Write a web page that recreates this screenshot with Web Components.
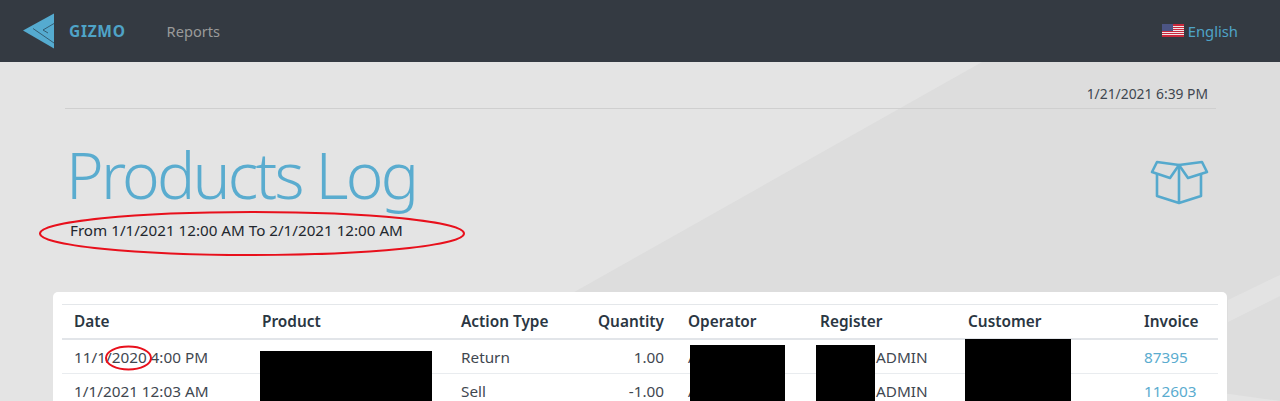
<!DOCTYPE html>
<html>
<head>
<meta charset="utf-8">
<title>Products Log</title>
<style>
    html, body { margin: 0; height: 100%; overflow: hidden; }
    body {
        font-family: "Noto Sans", "Open Sans", sans-serif;
        color: #212529;
        background: #e4e4e4;
    }
</style>
</head>
<body>
<gizmo-app>
    <gizmo-nav slot="nav"></gizmo-nav>
    <page-head></page-head>
    <log-table></log-table>
</gizmo-app>

<script>
// app shell with the diagonal background
class GizmoApp extends HTMLElement {
    connectedCallback() {
        const shadow = this.attachShadow({ mode: "open" });
        shadow.innerHTML = `
            <style>
                :host { display: block; position: relative; height: 401px; overflow: hidden; }
                .bg { position: absolute; left: 0; top: 0; width: 1280px; height: 401px; }
                .content { position: relative; }
            </style>
            <svg class="bg" viewBox="0 0 1280 401" aria-hidden="true">
                <rect width="1280" height="401" fill="#e4e4e4"/>
                <polygon points="982,62 1280,62 1280,401 560,300" fill="#dddddd"/>
                <polygon points="1280,275 1228,300 1228,322 1280,296" fill="#e3e3e3"/>
            </svg>
            <div class="content">
                <slot name="nav"></slot>
                <slot></slot>
            </div>
        `;
    }
}

class GizmoNav extends HTMLElement {
    connectedCallback() {
        const shadow = this.attachShadow({ mode: "open" });
        shadow.innerHTML = `
            <style>
                :host { display: block; }
                nav {
                    height: 62px;
                    background: #343a42;
                    display: flex;
                    align-items: center;
                    padding: 0 42px 1px 23px;
                    box-sizing: border-box;
                }
                .logo { width: 32px; height: 36px; display: block; }
                .brand {
                    margin-left: 14px;
                    color: #4fa3c7;
                    font-size: 15.5px;
                    font-weight: 700;
                    letter-spacing: 0.7px;
                }
                .link { margin-left: 41px; color: #9a9a9a; font-size: 14.6px; }
                .lang {
                    margin-left: auto;
                    display: flex;
                    align-items: center;
                    gap: 4px;
                    color: #4fa3c7;
                    font-size: 14.8px;
                }
                .flag { width: 22px; height: 13px; display: block; }
            </style>
            <nav>
                <svg class="logo" viewBox="0 0 32 36" aria-hidden="true">
                    <polygon points="0,17.5 31,0.5 31,35.5" fill="#55abd0"/>
                    <path d="M10 15.5 L31 30 M20 17 L31 10.5 M20 17 L25 20" fill="none" stroke="#2f5468" stroke-width="0.9"/>
                </svg>
                <span class="brand">GIZMO</span>
                <span class="link">Reports</span>
                <span class="lang">
                    <svg class="flag" viewBox="0 0 22 13" aria-hidden="true">
                        <rect width="22" height="13" fill="#c8283c"/>
                        <path d="M0 2.5H22M0 4.5H22M0 6.5H22M0 8.5H22M0 10.5H22" stroke="#f2e6e8" stroke-width="1"/>
                        <rect width="11" height="7" fill="#4c5585"/>
                    </svg>
                    English
                </span>
            </nav>
        `;
    }
}

class PageHead extends HTMLElement {
    connectedCallback() {
        const shadow = this.attachShadow({ mode: "open" });
        shadow.innerHTML = `
            <style>
                :host { display: block; position: relative; padding: 0 64px 0 65px; height: 230px; }
                .stamp {
                    height: 47px;
                    box-sizing: border-box;
                    border-bottom: 1px solid #cfcfcf;
                    display: flex;
                    justify-content: flex-end;
                    align-items: center;
                    padding: 17px 8px 0 0;
                    font-size: 13.85px;
                    color: #3f4750;
                }
                .row { display: flex; justify-content: space-between; padding: 28px 0 0 1px; }
                h1 {
                    margin: 0;
                    font-size: 64px;
                    line-height: 76px;
                    font-weight: 300;
                    letter-spacing: -2.8px;
                    color: #5aaccf;
                }
                .range { margin: 0; padding: 7px 0 0 4px; font-size: 15.2px; line-height: 20px; color: #22272e; }
                .box { width: 60px; height: 46px; display: block; margin: 23px 6px 0 0; }
                .mark { position: absolute; left: 0; top: 0; overflow: visible; }
            </style>
            <div class="stamp">1/21/2021 6:39 PM</div>
            <div class="row">
                <div>
                    <h1>Products Log</h1>
                    <p class="range">From 1/1/2021 12:00 AM To 2/1/2021 12:00 AM</p>
                </div>
                <svg class="box" viewBox="0 0 60 46" fill="none" stroke="#55a9cd" stroke-width="2.6" stroke-linejoin="round" aria-hidden="true">
                    <path d="M29 5 L29 43 L7 36 L7 14 M29 43 L51 36 L51 14"/>
                    <path d="M29 5 L7 2 L2 12 L20 18 Z"/>
                    <path d="M29 5 L52 2 L57 12 L38 18 Z"/>
                </svg>
            </div>
            <svg class="mark" width="1" height="1" aria-hidden="true">
                <ellipse cx="252" cy="171.5" rx="212" ry="21.5" fill="none" stroke="#e8101c" stroke-width="2"/>
            </svg>
        `;
    }
}

class LogTable extends HTMLElement {
    connectedCallback() {
        const shadow = this.attachShadow({ mode: "open" });
        const rows = [
            ["11/1/2020 4:00 PM", "Return", "1.00", "87395"],
            ["1/1/2021 12:03 AM", "Sell", "-1.00", "112603"],
        ];
        shadow.innerHTML = `
            <style>
                :host { display: block; position: relative; margin: 0 53px; }
                .card {
                    background: #fff;
                    border-radius: 5px;
                    padding: 12px 9px 0;
                    height: 140px;
                    box-sizing: border-box;
                }
                .grid {
                    display: grid;
                    grid-template-columns: 188px 199px 137px 90px 132px 148px 176px 86px;
                    font-size: 15.3px;
                    border-top: 1px solid #e4e7ea;
                    color: #3f4750;
                }
                .cell { padding: 0 12px; height: 33px; display: flex; align-items: center; white-space: nowrap; border-bottom: 1px solid #e9ecef; }
                .th { height: 33px; font-weight: 600; font-size: 15.4px; color: #2a3642; border-bottom: 2px solid #e2e5e9; }
                .num { justify-content: flex-end; }
                .reg { padding-left: 68px; }
                a { color: #5aaccf; text-decoration: none; }
                .redact { position: absolute; background: #000; }
                .mark { position: absolute; left: 0; top: 0; overflow: visible; }
            </style>
            <div class="card">
                <div class="grid">
                    <div class="cell th">Date</div>
                    <div class="cell th">Product</div>
                    <div class="cell th">Action Type</div>
                    <div class="cell th num">Quantity</div>
                    <div class="cell th">Operator</div>
                    <div class="cell th">Register</div>
                    <div class="cell th">Customer</div>
                    <div class="cell th">Invoice</div>
                    ${rows.map(r => `
                        <div class="cell">${r[0]}</div>
                        <div class="cell"></div>
                        <div class="cell">${r[1]}</div>
                        <div class="cell num">${r[2]}</div>
                        <div class="cell">ADMIN</div>
                        <div class="cell reg">ADMIN</div>
                        <div class="cell"></div>
                        <div class="cell"><a href="#">${r[3]}</a></div>
                    `).join("")}
                </div>
            </div>
            <div class="redact" style="left:207px;top:59px;width:172px;height:60px"></div>
            <div class="redact" style="left:637px;top:53px;width:95px;height:60px"></div>
            <div class="redact" style="left:763px;top:53px;width:59px;height:60px"></div>
            <div class="redact" style="left:912px;top:47px;width:106px;height:70px"></div>
            <svg class="mark" width="1" height="1" aria-hidden="true">
                <ellipse cx="75.5" cy="66" rx="22.5" ry="11.5" fill="none" stroke="#e8101c" stroke-width="2"/>
            </svg>
        `;
    }
}

customElements.define("gizmo-app", GizmoApp);
customElements.define("gizmo-nav", GizmoNav);
customElements.define("page-head", PageHead);
customElements.define("log-table", LogTable);
</script>
</body>
</html>
